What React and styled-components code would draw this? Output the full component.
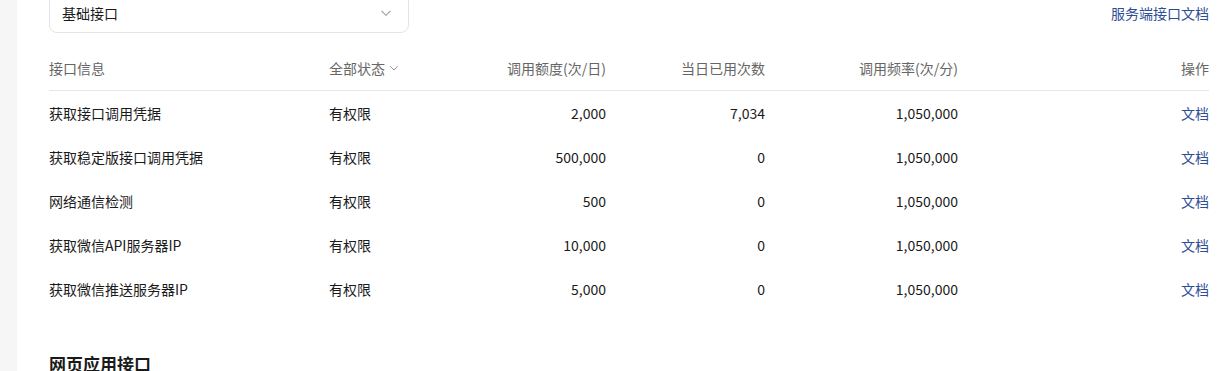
import React from "react";
import styled, { createGlobalStyle } from "styled-components";

const GlobalStyle = createGlobalStyle`
  html, body { margin: 0; padding: 0; background: #fff; }
  body {
    font-family: "Noto Sans CJK SC", "Noto Sans", sans-serif;
    font-size: 14px;
    color: #1a1a1a;
    overflow: hidden;
  }
`;

const rows = [
  { name: "获取接口调用凭据", status: "有权限", quota: "2,000", used: "7,034", rate: "1,050,000" },
  { name: "获取稳定版接口调用凭据", status: "有权限", quota: "500,000", used: "0", rate: "1,050,000" },
  { name: "网络通信检测", status: "有权限", quota: "500", used: "0", rate: "1,050,000" },
  { name: "获取微信API服务器IP", status: "有权限", quota: "10,000", used: "0", rate: "1,050,000" },
  { name: "获取微信推送服务器IP", status: "有权限", quota: "5,000", used: "0", rate: "1,050,000" },
];

const Chevron = ({ size = 12, color = "#999" }) => (
  <svg width={size} height={size} viewBox="0 0 12 12" fill="none">
    <path d="M2.5 4.5 L6 8 L9.5 4.5" stroke={color} strokeWidth="1" strokeLinecap="round" strokeLinejoin="round" />
  </svg>
);

function App() {
  return (
    <Page>
      <GlobalStyle />
      <Sidebar />
      <Main>
        <Toolbar>
          <Select>
            <span>基础接口</span>
            <Chevron size={14} color="#aaa" />
          </Select>
          <DocLink>服务端接口文档</DocLink>
        </Toolbar>
        <Table>
          <HeadRow>
            <Cell>接口信息</Cell>
            <Cell>
              <Filter>
                全部状态
                <Chevron />
              </Filter>
            </Cell>
            <Cell $right>调用额度(次/日)</Cell>
            <Cell $right>当日已用次数</Cell>
            <Cell $right>调用频率(次/分)</Cell>
            <Cell $right>操作</Cell>
          </HeadRow>
          {rows.map((r) => (
            <BodyRow key={r.name}>
              <Cell>{r.name}</Cell>
              <Cell>{r.status}</Cell>
              <Cell $right>{r.quota}</Cell>
              <Cell $right>{r.used}</Cell>
              <Cell $right>{r.rate}</Cell>
              <Cell $right>
                <Link>文档</Link>
              </Cell>
            </BodyRow>
          ))}
        </Table>
        <SectionTitle>网页应用接口</SectionTitle>
      </Main>
    </Page>
  );
}

export default App;

const Page = styled.div`
  display: flex;
  width: 1218px;
  height: 371px;
  overflow: hidden;
`;

const Sidebar = styled.div`
  width: 17px;
  flex-shrink: 0;
  background: #f6f6f6;
`;

const Main = styled.div`
  flex: 1;
  padding: 0 9px 0 32px;
  margin-top: -7px;
`;

const Toolbar = styled.div`
  display: flex;
  justify-content: space-between;
  align-items: center;
  height: 40px;
`;

const Select = styled.div`
  box-sizing: border-box;
  width: 360px;
  height: 40px;
  border: 1px solid #e4e4e4;
  border-radius: 8px;
  display: flex;
  align-items: center;
  justify-content: space-between;
  padding: 0 15px 0 12px;
  color: #1a1a1a;
`;

const DocLink = styled.a`
  color: #2d4d94;
  cursor: pointer;
`;

const Table = styled.div`
  margin-top: 13px;
`;

const RowBase = styled.div`
  display: grid;
  grid-template-columns: 280px 120px 157px 159px 193px 1fr;
  align-items: center;
  height: 44px;
`;

const HeadRow = styled(RowBase)`
  color: #666;
  border-bottom: 1px solid #e7e7e7;
`;

const BodyRow = styled(RowBase)`
  color: #1a1a1a;
`;

const Cell = styled.div`
  text-align: ${(p) => (p.$right ? "right" : "left")};
  white-space: nowrap;
`;

const Filter = styled.span`
  display: inline-flex;
  align-items: center;
  gap: 3px;
`;

const Link = styled.a`
  color: #2d4d94;
  cursor: pointer;
`;

const SectionTitle = styled.h3`
  margin: 40px 0 0;
  font-size: 17px;
  font-weight: 600;
  color: #1a1a1a;
`;
